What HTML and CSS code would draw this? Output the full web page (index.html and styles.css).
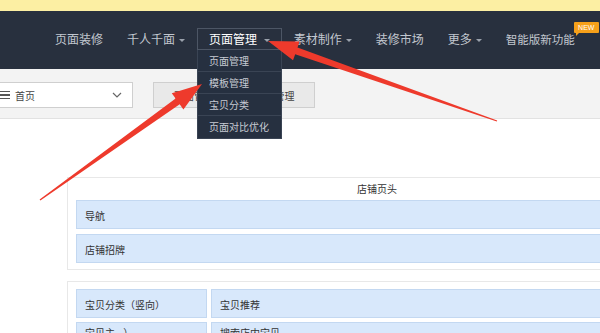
FILE: index.html
```html
<!DOCTYPE html>
<html lang="zh-CN">
<head>
    <meta charset="UTF-8">
    <meta name="viewport" content="width=device-width, initial-scale=1.0">
    <title>页面管理</title>
    <link rel="stylesheet" href="styles.css">
</head>
<body>
    <div class="notice"></div>

    <nav class="topnav">
        <div class="nav-item">页面装修</div>
        <div class="nav-item caret">千人千面</div>
        <div class="nav-item caret active">页面管理
            <ul class="dropdown">
                <li>页面管理</li>
                <li>模板管理</li>
                <li>宝贝分类</li>
                <li>页面对比优化</li>
            </ul>
        </div>
        <div class="nav-item caret">素材制作</div>
        <div class="nav-item">装修市场</div>
        <div class="nav-item caret">更多</div>
        <div class="nav-item last">智能版新功能<span class="badge">NEW</span></div>
    </nav>

    <div class="toolbar">
        <div class="page-select">
            <span class="menu-icon"><i></i><i></i><i></i></span>
            <span class="select-text">首页</span>
            <svg class="chevron" width="10" height="6" viewBox="0 0 10 6">
                <polyline points="1,1 5,5 9,1" fill="none" stroke="#666" stroke-width="1.2"/>
            </svg>
        </div>
        <div class="btn-group">
            <button>页面管理</button>
            <button>模板管理</button>
        </div>
    </div>

    <div class="stage">
        <div class="card">
            <div class="card-title">店铺页头</div>
            <div class="module">导航</div>
            <div class="module">店铺招牌</div>
        </div>
        <div class="card card-body">
            <div class="module-row">
                <div class="module side">宝贝分类（竖向）</div>
                <div class="module main">宝贝推荐</div>
            </div>
            <div class="module-row">
                <div class="module side">宝贝主...）</div>
                <div class="module main">搜索店内宝贝</div>
            </div>
        </div>
    </div>

    <!-- annotation arrows drawn over the screenshot -->
    <svg class="arrows" width="600" height="333" viewBox="0 0 600 333">
        <polygon fill="#ee3a2c" points="40.4,200.5 179.7,104.3 183.4,109.6 202,84 171.8,93.3 175.6,98.6 39.6,199.5"/>
        <polygon fill="#ee3a2c" points="497.2,120.4 297.5,47.6 299.6,41.5 268,41 293,60.3 295.2,54.2 496.8,121.6"/>
    </svg>
</body>
</html>
```

FILE: styles.css
```css
* {
    box-sizing: border-box;
}
body {
    margin: 0;
    width: 600px;
    height: 333px;
    overflow: hidden;
    position: relative;
    background-color: #fff;
    font-family: "Noto Sans CJK SC", "Noto Sans", sans-serif;
    color: #333;
}
.notice {
    height: 11px;
    background-color: #fcefa3;
}
.topnav {
    height: 58px;
    background-color: #28303e;
    display: flex;
    align-items: flex-start;
    padding: 17px 0 0 43px;
}
.nav-item {
    position: relative;
    height: 22px;
    line-height: 20px;
    padding: 0 11px;
    border: 1px solid transparent;
    font-size: 12px;
    color: #c2c7cf;
    white-space: nowrap;
}
.nav-item.last {
    font-size: 11.5px;
}
.nav-item.caret::after {
    content: "";
    display: inline-block;
    vertical-align: middle;
    margin-left: 4px;
    border-left: 3px solid transparent;
    border-right: 3px solid transparent;
    border-top: 3px solid #9aa1ac;
}
.nav-item.active {
    border-color: #4d5665;
    color: #fff;
}
.dropdown {
    position: absolute;
    top: calc(100% + 1px);
    left: -1px;
    right: -1px;
    margin: 0;
    padding: 0;
    list-style: none;
    background-color: #263040;
    border: 1px solid #3a4454;
    border-top: none;
    z-index: 5;
}
.dropdown li {
    height: 22px;
    line-height: 21px;
    padding-left: 11px;
    font-size: 10px;
    color: #c6cbd3;
    border-bottom: 1px solid #3a4454;
}
.dropdown li:last-child {
    border-bottom: none;
}
.badge {
    position: absolute;
    top: -7px;
    right: -13px;
    width: 25px;
    height: 11px;
    line-height: 11px;
    background-color: #f6a01a;
    color: #fff;
    font-family: "Liberation Sans", sans-serif;
    font-size: 7px;
    text-align: center;
    border-radius: 1px;
}
.badge::after {
    content: "";
    position: absolute;
    left: 2px;
    bottom: -3px;
    border-left: 3px solid #f6a01a;
    border-bottom: 3px solid transparent;
}
.toolbar {
    height: 50px;
    background-color: #f3f3f3;
    border-bottom: 1px solid #e2e2e2;
    display: flex;
    align-items: flex-start;
    padding-top: 13px;
}
.page-select {
    width: 133px;
    height: 26px;
    background-color: #fff;
    border: 1px solid #cfcfcf;
    border-left: none;
    display: flex;
    align-items: center;
    font-size: 10px;
    color: #444;
}
.menu-icon {
    display: flex;
    flex-direction: column;
    gap: 2px;
    width: 10px;
    margin-right: 5px;
}
.menu-icon i {
    display: block;
    height: 1.5px;
    background-color: #555;
}
.select-text {
    flex: 1;
}
.chevron {
    margin-right: 10px;
}
.btn-group {
    display: flex;
    margin-left: 20px;
    border: 1px solid #cfcfcf;
    background-color: #e9e9e9;
}
.btn-group button {
    width: 80px;
    height: 24px;
    border: none;
    background: none;
    font-family: inherit;
    font-size: 10px;
    color: #444;
    padding: 0;
}
.btn-group button + button {
    border-left: 1px solid #cfcfcf;
}
.stage {
    padding: 58px 0 0 67px;
}
.card {
    width: 620px;
    border: 1px solid #e8e8e8;
    padding: 0 8px 6px;
}
.card + .card {
    margin-top: 11px;
}
.card-body {
    padding-top: 7px;
}
.card-title {
    height: 22px;
    line-height: 22px;
    text-align: center;
    font-size: 10px;
    color: #333;
}
.module {
    height: 29px;
    line-height: 29px;
    padding-left: 8px;
    background-color: #d8e8fb;
    border: 1px solid #c3d8f1;
    font-size: 10px;
    color: #333;
}
.module + .module {
    margin-top: 5px;
}
.module-row {
    display: flex;
    gap: 4px;
    margin-bottom: 4px;
}
.module-row + .module-row .module {
    line-height: 20px;
}
.module-row .module + .module {
    margin-top: 0;
}
.module.side {
    width: 131px;
}
.module.main {
    flex: 1;
}
.arrows {
    position: absolute;
    top: 0;
    left: 0;
    pointer-events: none;
    z-index: 10;
}
```
